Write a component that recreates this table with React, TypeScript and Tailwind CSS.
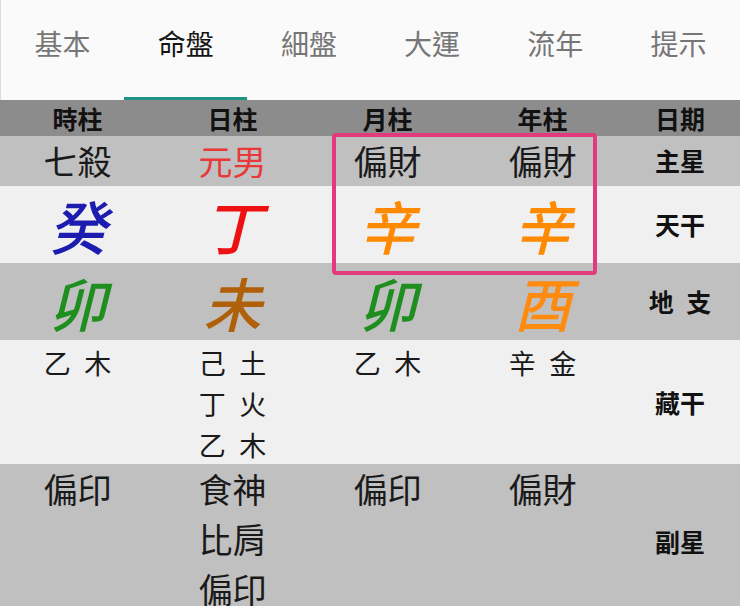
const FONT = "font-['Noto_Sans_CJK_TC','Noto_Sans',sans-serif]";
const GRID = "grid grid-cols-[155px_155px_155px_155px_120px]";

const tabs = ["基本", "命盤", "細盤", "大運", "流年", "提示"];

type Big = { ch: string; color: string };

const stems: Big[] = [
  { ch: "癸", color: "text-[#1c1cb0]" },
  { ch: "丁", color: "text-[#ee1111]" },
  { ch: "辛", color: "text-[#ff8a00]" },
  { ch: "辛", color: "text-[#ff8a00]" },
];

const branches: Big[] = [
  { ch: "卯", color: "text-[#1e8e1e]" },
  { ch: "未", color: "text-[#b0600a]" },
  { ch: "卯", color: "text-[#1e8e1e]" },
  { ch: "酉", color: "text-[#ff8a10]" },
];

// en space between stem and element, like the app
const hidden = [["乙\u2002木"], ["己\u2002土", "丁\u2002火", "乙\u2002木"], ["乙\u2002木"], ["辛\u2002金"]];
const sub = [["偏印"], ["食神", "比肩", "偏印"], ["偏印"], ["偏財"]];

function Label({ text }: { text: string }) {
  return (
    <div className="flex items-center justify-center text-[25px] font-bold text-[#111]">
      {text}
    </div>
  );
}

function BigRow({ items, label, bg }: { items: Big[]; label: string; bg: string }) {
  return (
    <div className={`${GRID} h-[77px] ${bg}`}>
      {items.map((it, i) => (
        <div
          key={i}
          className={`flex items-center justify-center text-[58px] font-medium italic leading-none ${it.color}`}
        >
          {it.ch}
        </div>
      ))}
      <Label text={label} />
    </div>
  );
}

export default function App() {
  return (
    <div className={`${FONT} w-[740px] h-[606px] overflow-hidden bg-[#fafafa] relative`}>
      {/* tab bar */}
      <div className="flex h-[100px] border-l border-[#dcdcdc]">
        {tabs.map((t, i) => (
          <div key={t} className="flex-1 flex flex-col items-center justify-between">
            <span
              className={`pt-[25px] text-[28px] leading-[36px] ${
                i === 1 ? "text-[#151515]" : "text-[#767676]"
              }`}
            >
              {t}
            </span>
            <div className={`h-[3px] w-full ${i === 1 ? "bg-[#1f9488]" : ""}`} />
          </div>
        ))}
      </div>

      {/* header */}
      <div className={`${GRID} h-[36px] bg-[#8c8c8c] text-[25px] font-bold text-[#111] leading-[36px] text-center`}>
        <div>時柱</div>
        <div>日柱</div>
        <div>月柱</div>
        <div>年柱</div>
        <div>日期</div>
      </div>

      {/* 主星 */}
      <div className={`${GRID} h-[50px] bg-[#c0c0c0]`}>
        {["七殺", "元男", "偏財", "偏財"].map((t, i) => (
          <div
            key={i}
            className={`text-center text-[34px] leading-[50px] ${
              i === 1 ? "text-[#e8383a]" : "text-[#1a1a1a]"
            }`}
          >
            {t}
          </div>
        ))}
        <Label text="主星" />
      </div>

      <BigRow items={stems} label="天干" bg="bg-[#f0f0f0]" />
      <BigRow items={branches} label={"地\u2002支"} bg="bg-[#c0c0c0]" />

      {/* 藏干 */}
      <div className={`${GRID} h-[124px] bg-[#f0f0f0]`}>
        {hidden.map((lines, i) => (
          <div key={i} className="flex flex-col items-center pt-[2px] text-[27px] leading-[41px] text-[#1a1a1a]">
            {lines.map((l, j) => (
              <div key={j}>{l}</div>
            ))}
          </div>
        ))}
        <Label text="藏干" />
      </div>

      {/* 副星 */}
      <div className={`${GRID} h-[156px] bg-[#c0c0c0]`}>
        {sub.map((lines, i) => (
          <div key={i} className="flex flex-col items-center text-[34px] leading-[50px] text-[#1a1a1a]">
            {lines.map((l, j) => (
              <div key={j}>{l}</div>
            ))}
          </div>
        ))}
        <Label text="副星" />
      </div>

      {/* highlight box over 月柱/年柱 */}
      <div className="absolute left-[332px] top-[133px] w-[265px] h-[142px] border-4 border-[#e23a7c] rounded-[4px] pointer-events-none" />
    </div>
  );
}
